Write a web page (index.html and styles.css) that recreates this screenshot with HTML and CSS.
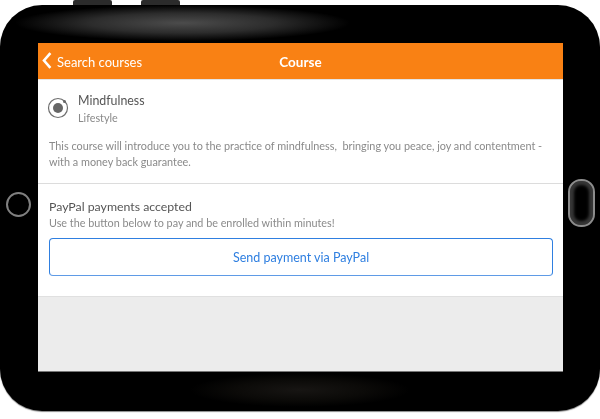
FILE: index.html
```html
<!DOCTYPE html>
<html lang="en">
<head>
    <meta charset="UTF-8">
    <meta name="viewport" content="width=device-width, initial-scale=1.0">
    <title>Course</title>
    <link rel="stylesheet" href="styles.css">
</head>
<body>
    <div class="tablet">
        <div class="side-btn side-btn-one"></div>
        <div class="side-btn side-btn-two"></div>
        <div class="glare glare-top"></div>
        <div class="glare glare-bottom"></div>
        <div class="home-ring"></div>
        <div class="camera-pill"></div>

        <div class="screen">
            <header class="nav-bar">
                <a class="nav-back">
                    <svg class="nav-chevron" width="10" height="17" viewBox="0 0 10 17">
                        <path d="M8.4 1.2 L2 8.5 L8.4 15.8" fill="none" stroke="#fff" stroke-width="2.6"/>
                    </svg>
                    Search courses
                </a>
                <div class="nav-title">Course</div>
            </header>

            <section class="course-card">
                <div class="course-head">
                    <div class="course-icon">
                        <svg width="22" height="22" viewBox="0 0 22 22">
                            <circle cx="11" cy="11" r="9.5" fill="none" stroke="#6e6e6e" stroke-width="1.2"/>
                            <circle cx="11" cy="11" r="5" fill="#666"/>
                            <circle cx="17.5" cy="4.5" r="1.5" fill="#666"/>
                        </svg>
                    </div>
                    <div class="course-names">
                        <div class="course-name">Mindfulness</div>
                        <div class="course-cat">Lifestyle</div>
                    </div>
                </div>
                <p class="course-desc">This course will introduce you to the practice of mindfulness,&nbsp; bringing you peace, joy and contentment - with a money back guarantee.</p>
            </section>

            <section class="pay-card">
                <div class="pay-title">PayPal payments accepted</div>
                <div class="pay-note">Use the button below to pay and be enrolled within minutes!</div>
                <button class="pay-button">Send payment via PayPal</button>
            </section>

            <div class="screen-rest"></div>
        </div>
    </div>
</body>
</html>
```

FILE: styles.css
```css
html, body {
    margin: 0;
    height: 419px;
    overflow: hidden;
    background: #fff;
}
body {
    font-family: Lato, "Noto Sans", sans-serif;
    padding-top: 5px;
    box-sizing: border-box;
}
.tablet {
    position: relative;
    height: 406px;
    box-sizing: border-box;
    padding: 38px 37px 39px 38px;
    background: #000;
    border-radius: 42px;
    box-shadow: 0 1px 1px #888;
}
.side-btn {
    position: absolute;
    top: -5px;
    width: 39px;
    height: 5px;
    background: #2b2b2b;
    border-radius: 2px 2px 0 0;
}
.side-btn-one {
    left: 73px;
}
.side-btn-two {
    left: 141px;
}
.glare {
    position: absolute;
    border-radius: 50%;
}
.glare-top {
    left: 15px;
    top: 0;
    width: 335px;
    height: 36px;
    background: radial-gradient(closest-side, #4c4c4c 0%, #2c2c2c 55%, #000 100%);
}
.glare-bottom {
    left: 190px;
    top: 368px;
    width: 220px;
    height: 34px;
    background: radial-gradient(closest-side, #171513 0%, #0b0a08 60%, #000 100%);
}
.home-ring {
    position: absolute;
    left: 6px;
    top: 187px;
    width: 21px;
    height: 21px;
    border: 2px solid #808080;
    border-radius: 50%;
}
.camera-pill {
    position: absolute;
    left: 568px;
    top: 174px;
    width: 23px;
    height: 44px;
    border: 2px solid #8c8c8c;
    border-radius: 13px;
    background: #000;
    box-shadow: inset 0 0 3px 4px #363636;
}
.screen {
    position: relative;
    display: flex;
    flex-direction: column;
    height: 329px;
    background: #ececec;
    border-bottom: 1px solid #777;
    box-sizing: border-box;
    filter: blur(0.35px);
}
.nav-bar {
    position: relative;
    display: flex;
    align-items: center;
    justify-content: center;
    height: 36px;
    padding-top: 2px;
    box-sizing: border-box;
    flex-shrink: 0;
    background: #f98114;
    color: #fff;
    font-size: 13px;
}
.nav-back {
    position: absolute;
    left: 4px;
    top: 0;
    height: 36px;
    padding-top: 2px;
    box-sizing: border-box;
    display: flex;
    align-items: center;
    gap: 5px;
}
.nav-chevron {
    margin-top: -3px;
}
.nav-title {
    font-size: 13.5px;
    font-weight: 700;
}
.course-card {
    height: 105px;
    flex-shrink: 0;
    box-sizing: border-box;
    background: #fff;
    border-top: 1px solid #e4e4e4;
    border-bottom: 1px solid #dcdcdc;
}
.course-head {
    display: flex;
    padding: 12px 0 0 9px;
}
.course-icon {
    padding: 5px 9px 0 0;
}
.course-name {
    font-size: 12.4px;
    line-height: 18px;
    color: #555;
}
.course-cat {
    font-size: 10.8px;
    line-height: 16px;
    color: #8a8a8a;
}
.course-desc {
    margin: 12px 11px 0;
    font-size: 10.85px;
    line-height: 16px;
    color: #8a8a8a;
}
.pay-card {
    height: 113px;
    flex-shrink: 0;
    box-sizing: border-box;
    padding: 14px 10px 0 11px;
    background: #fff;
    border-bottom: 1px solid #e0e0e0;
}
.pay-title {
    font-size: 12.3px;
    line-height: 17px;
    color: #555;
}
.pay-note {
    font-size: 10.8px;
    line-height: 15px;
    color: #8a8a8a;
}
.pay-button {
    display: block;
    width: 100%;
    height: 38px;
    margin-top: 8px;
    padding: 0;
    font-family: inherit;
    font-size: 12.5px;
    color: #2f7fe0;
    background: #fff;
    border: 1.5px solid #2f7fe0;
    border-bottom-color: #5f9be6;
    border-radius: 4px;
}
.screen-rest {
    flex: 1;
    background: #ececec;
}
```
